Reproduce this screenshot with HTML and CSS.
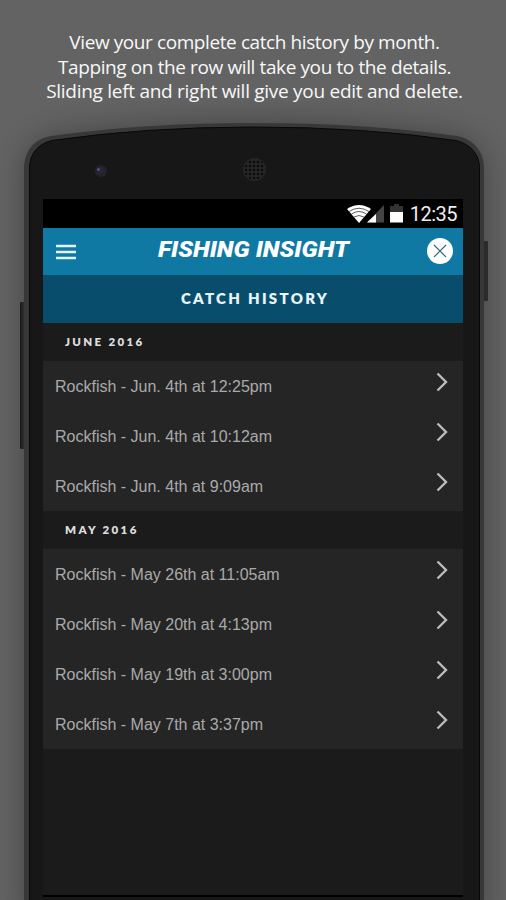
FILE: index.html
```html
<!DOCTYPE html>
<html lang="en">
<head>
<meta charset="utf-8">
<title>Fishing Insight</title>
<link rel="stylesheet" href="styles.css">
</head>
<body>
<svg class="device" viewBox="0 0 506 900" aria-hidden="true">
  <defs>
    <linearGradient id="key" x1="0" x2="1"><stop offset="0" stop-color="#181818"/><stop offset="1" stop-color="#363636"/></linearGradient>
    <pattern id="mesh" width="4" height="4" patternUnits="userSpaceOnUse"><rect width="4" height="4" fill="#252525"/><circle cx="2" cy="2" r="1.300" fill="#0b0b0b"/></pattern>
    <filter id="soft" x="-20%" y="-20%" width="140%" height="140%"><feGaussianBlur stdDeviation="15"/></filter>
  </defs>
  <path class="shadow" filter="url(#soft)" d="M25 920V170Q25 146 51 137Q150 123 254 123Q360 123 458 137Q484 146 484 170V920Z"/>
  <rect x="20" y="302" width="5" height="147" rx="1" fill="url(#key)"/>
  <rect x="483" y="241" width="5" height="60" rx="1" fill="#2b2b2b"/>
  <path fill="#383838" d="M24 920V169C24 151 34 139 51 136Q145 123 254 123Q363 123 457 136C473 139 484 151 484 169V920Z"/>
  <path fill="#171717" stroke="#080808" d="M29.500 920V168C29.500 154 38 144 52 140.500Q145 127 254 127Q363 127 456 140.500C470 144 479.500 154 479.500 168V920Z"/>
  <circle cx="101" cy="171" r="6" fill="#242424"/><circle cx="100" cy="170.500" r="3.600" fill="#28243e"/><circle cx="98.500" cy="169.500" r="1.300" fill="#5f5890"/>
  <circle cx="254.500" cy="169.500" r="11" fill="url(#mesh)" stroke="#292929"/>
</svg>
<p class="caption"><span class="l1">View your complete catch history by month.</span><span class="l2">Tapping on the row will take you to the details.</span><span class="l3">Sliding left and right will give you edit and delete.</span></p>
<main class="screen">
  <div class="status">
    <svg class="signals" viewBox="0 0 60 28" aria-hidden="true">
      <path fill="#fff" d="M0 9Q12 1 24 9L12 23Z"/>
      <path fill="none" stroke="#333" stroke-width=".8" d="M2 11.500Q12 5 22 11.500M4.500 14Q12 9 19.500 14M7 17Q12 14 17 17"/>
      <path fill="#444" d="M37 5V22.500H20Z"/><path fill="#fff" d="M29 14V22.500H20Z"/>
      <path fill="#333" d="M43 6H47V4H52V6H56V13H43Z"/><path fill="#fff" d="M43 12H56V22.500H43Z"/>
    </svg>
    <span class="clock">12:35</span>
  </div>
  <header class="bar">
    <svg class="menu" viewBox="0 0 20 16" aria-hidden="true"><path stroke="#e4f4fb" stroke-width="2.500" d="M0 2H20M0 8H20M0 14H20"/></svg>
    <svg class="logo" viewBox="0 0 196 26"><text x="2" y="20" textLength="191" lengthAdjust="spacingAndGlyphs">FISHING INSIGHT</text></svg>
    <svg class="close" viewBox="0 0 26 26" aria-hidden="true"><circle cx="13" cy="13" r="13" fill="#fff"/><path stroke="#326982" stroke-width="1.200" d="M7 7L19 19M19 7L7 19"/></svg>
  </header>
  <h1 class="title">CATCH HISTORY</h1>
  <h2 class="month june">JUNE 2016</h2>
  <ul class="list">
    <li><span>Rockfish - Jun. 4th at 12:25pm</span><svg viewBox="0 0 12 20"><path d="M1.500 1.500L10 10L1.500 18.500"/></svg></li>
    <li><span>Rockfish - Jun. 4th at 10:12am</span><svg viewBox="0 0 12 20"><path d="M1.500 1.500L10 10L1.500 18.500"/></svg></li>
    <li><span>Rockfish - Jun. 4th at 9:09am</span><svg viewBox="0 0 12 20"><path d="M1.500 1.500L10 10L1.500 18.500"/></svg></li>
  </ul>
  <h2 class="month may">MAY 2016</h2>
  <ul class="list">
    <li><span>Rockfish - May 26th at 11:05am</span><svg viewBox="0 0 12 20"><path d="M1.500 1.500L10 10L1.500 18.500"/></svg></li>
    <li><span>Rockfish - May 20th at 4:13pm</span><svg viewBox="0 0 12 20"><path d="M1.500 1.500L10 10L1.500 18.500"/></svg></li>
    <li><span>Rockfish - May 19th at 3:00pm</span><svg viewBox="0 0 12 20"><path d="M1.500 1.500L10 10L1.500 18.500"/></svg></li>
    <li><span>Rockfish - May 7th at 3:37pm</span><svg viewBox="0 0 12 20"><path d="M1.500 1.500L10 10L1.500 18.500"/></svg></li>
  </ul>
</main>
</body>
</html>
```
FILE: styles.css
```css
* { box-sizing: border-box; }
body { margin: 0; width: 506px; height: 900px; overflow: hidden; background: #636363; position: relative; display: flex; flex-direction: column; align-items: center; font-family: "Liberation Sans", sans-serif; }
.device { position: absolute; inset: 0; width: 506px; height: 900px; }
.shadow { fill: #000; opacity: .32; }
.caption { position: relative; margin: 30px 0 0; width: 506px; height: 169px; padding-left: 3px; display: flex; flex-direction: column; align-items: center; font: 19px/24.5px "Open Sans", sans-serif; color: #f8f8f8; white-space: nowrap; }
.l1 { letter-spacing: -.41px; }
.l2 { letter-spacing: -.39px; }
.l3 { letter-spacing: -.28px; }
.screen { position: relative; width: 420px; height: 698px; background: #1b1b1b; border-bottom: 2px solid #000; }
.status { height: 29px; background: #000; display: flex; justify-content: flex-end; align-items: center; padding-right: 6px; }
.signals { width: 60px; height: 28px; margin-right: 3px; }
.clock { color: #eee; font: 20px/29px Roboto, sans-serif; letter-spacing: -.5px; padding-top: 1px; }
.bar { height: 47px; background: #1079a3; display: grid; grid-template-columns: 20px 1fr 26px; align-items: center; padding: 0 10px 0 13px; }
.menu { width: 20px; height: 16px; }
.logo { width: 196px; height: 26px; margin-left: 80px; margin-top: -4px; }
.logo text { font: italic 900 22px Roboto, sans-serif; fill: #fff; }
.close { width: 26px; height: 26px; margin-top: -1px; }
.title { margin: 0; height: 48px; background: #084e6c; color: #e9f5fb; text-align: center; font: 800 15px/46px Lato, sans-serif; letter-spacing: 2.300px; padding-left: 4px; }
.month { margin: 0; height: 38px; padding-left: 22px; color: #ddd; font: 800 11.500px/37px Lato, sans-serif; letter-spacing: 2.350px; }
.list { margin: 0; padding: 0; list-style: none; background: #252525; }
.list li { height: 50px; display: flex; justify-content: space-between; align-items: center; padding: 2px 15px 0 12px; font-size: 16px; color: #aaa; }
.list svg { width: 12px; height: 20px; margin-top: -10px; fill: none; stroke: #bbb; stroke-width: 2.400; }
```
